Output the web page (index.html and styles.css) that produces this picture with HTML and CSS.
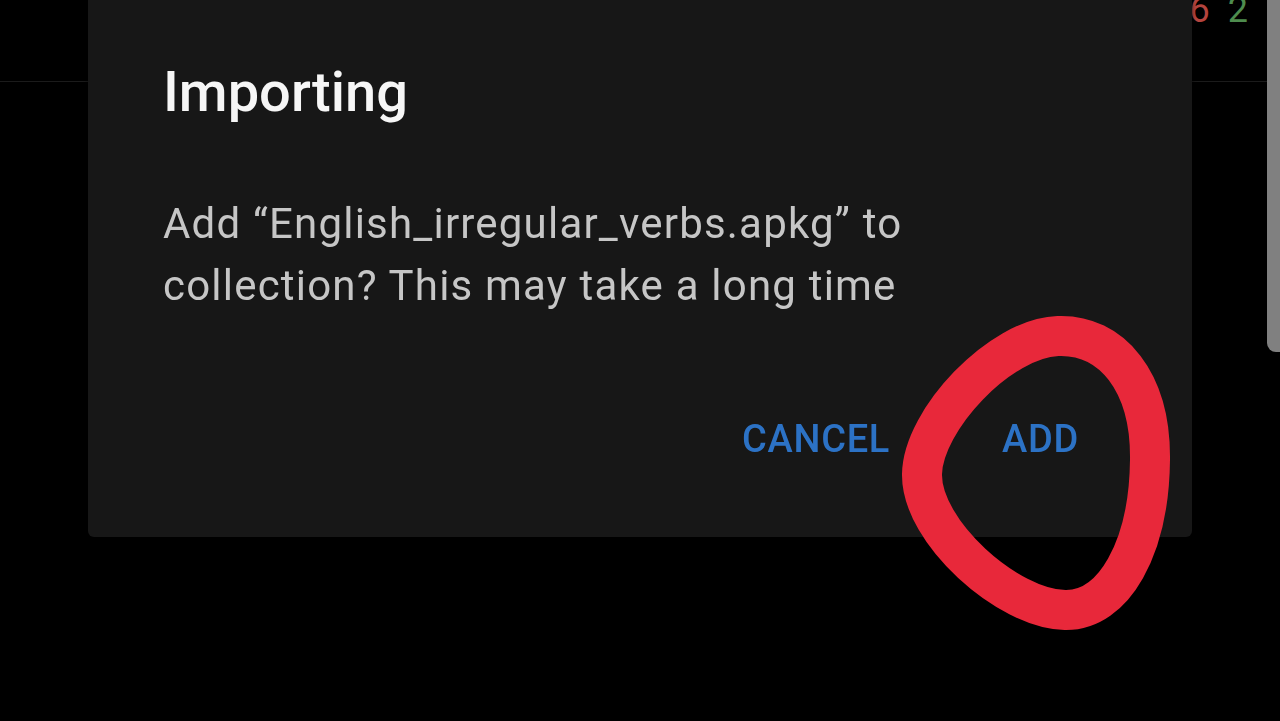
FILE: index.html
```html
<!DOCTYPE html>
<html lang="en">
  <head>
    <meta charset="UTF-8" />
    <meta name="viewport" content="width=device-width, initial-scale=1.0" />
    <title>Importing</title>
    <link rel="stylesheet" href="styles.css">
  </head>
  <body>
    <div class="deck-list">
      <div class="deck-row">
        <div class="deck-counts">
          <span class="count due">6</span>
          <span class="count new">2</span>
        </div>
      </div>
    </div>

    <div class="scrollbar"></div>

    <div class="dialog-overlay">
      <div class="dialog">
        <h1 class="dialog-title">Importing</h1>
        <p class="dialog-message">
          Add “English_irregular_verbs.apkg” to<br />
          collection? This may take a long time
        </p>
        <div class="dialog-actions">
          <button class="dialog-button">CANCEL</button>
          <button class="dialog-button">ADD</button>
        </div>
      </div>
    </div>

    <!-- hand drawn mark around the ADD button -->
    <svg class="scribble" width="1280" height="721" viewBox="0 0 1280 721">
      <path
        d="M 1058 336 C 1112 334, 1151 382, 1150 460 C 1149 548, 1114 611, 1065 610 C 1008 609, 921 532, 922 474 C 923 420, 1000 338, 1058 336 Z"
      />
    </svg>
  </body>
</html>
```

FILE: styles.css
```css
* {
  margin: 0;
  padding: 0;
  box-sizing: border-box;
}

body,
html {
  height: 100%;
  width: 100%;
  overflow: hidden;
  position: relative;
  background-color: #000;
  font-family: Roboto, "Liberation Sans", sans-serif;
}

.deck-list {
  width: 100%;
}

.deck-row {
  height: 82px;
  border-bottom: 1px solid #1b1b1b;
  display: flex;
  justify-content: flex-end;
  align-items: flex-start;
  padding-right: 32px;
}

.deck-counts {
  display: flex;
  gap: 18px;
  margin-top: -8px;
  font-size: 36px;
  line-height: 36px;
}

.count.due {
  color: #b4443e;
}

.count.new {
  color: #4e8c4e;
}

.scrollbar {
  position: absolute;
  top: 0;
  right: 0;
  width: 13px;
  height: 352px;
  background-color: #808080;
  border-bottom-left-radius: 9px;
}

.dialog-overlay {
  position: fixed;
  top: 0;
  left: 0;
  right: 0;
  bottom: 0;
  padding: 0 88px;
}

.dialog {
  height: 537px;
  background-color: #171717;
  border-radius: 0 0 6px 6px;
  box-shadow: 0 2px 4px rgba(0, 0, 0, 0.6);
  padding: 60px 0 0 75px;
  display: flex;
  flex-direction: column;
}

.dialog-title {
  font-size: 56px;
  line-height: 64px;
  font-weight: 500;
  color: #f6f6f6;
}

.dialog-message {
  margin-top: 69px;
  font-size: 42px;
  line-height: 62px;
  letter-spacing: 1.2px;
  color: #c6c6c6;
}

.dialog-actions {
  margin-top: 98px;
  display: flex;
  justify-content: flex-end;
  gap: 112px;
  padding-right: 113px;
}

.dialog-button {
  background: none;
  border: none;
  font-family: Roboto, "Liberation Sans", sans-serif;
  font-size: 38px;
  line-height: 48px;
  font-weight: 500;
  letter-spacing: 0.7px;
  color: #2c72c5;
  cursor: pointer;
}

.scribble {
  position: absolute;
  top: 0;
  left: 0;
  pointer-events: none;
}

.scribble path {
  fill: none;
  stroke: #e8283a;
  stroke-width: 40;
  stroke-linejoin: round;
}
```
